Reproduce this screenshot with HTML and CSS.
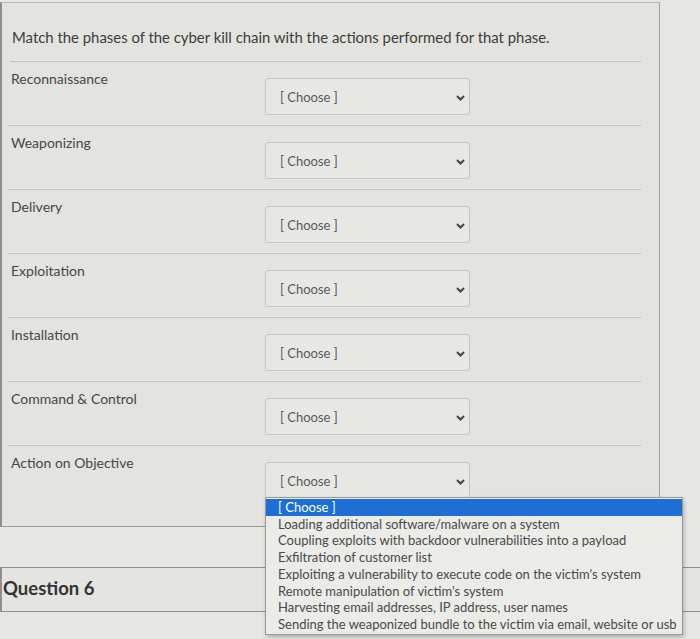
FILE: index.html
```html
<!DOCTYPE html>
<html lang="en">
<head>
  <meta charset="UTF-8">
  <title>Quiz - Question 5</title>
  <link rel="stylesheet" href="styles.css">
</head>
<body>
  <div class="question">
    <div class="question-text">Match the phases of the cyber kill chain with the actions performed for that phase.</div>

    <div class="answers">
      <div class="answer">
        <div class="answer-label">Reconnaissance</div>
        <div class="picker">
          <div class="select"><span>[ Choose ]</span><svg class="chev" width="9" height="6" viewBox="0 0 9 6"><polyline points="1,1 4.5,4.5 8,1" /></svg></div>
        </div>
      </div>
      <div class="answer">
        <div class="answer-label">Weaponizing</div>
        <div class="picker">
          <div class="select"><span>[ Choose ]</span><svg class="chev" width="9" height="6" viewBox="0 0 9 6"><polyline points="1,1 4.5,4.5 8,1" /></svg></div>
        </div>
      </div>
      <div class="answer">
        <div class="answer-label">Delivery</div>
        <div class="picker">
          <div class="select"><span>[ Choose ]</span><svg class="chev" width="9" height="6" viewBox="0 0 9 6"><polyline points="1,1 4.5,4.5 8,1" /></svg></div>
        </div>
      </div>
      <div class="answer">
        <div class="answer-label">Exploitation</div>
        <div class="picker">
          <div class="select"><span>[ Choose ]</span><svg class="chev" width="9" height="6" viewBox="0 0 9 6"><polyline points="1,1 4.5,4.5 8,1" /></svg></div>
        </div>
      </div>
      <div class="answer">
        <div class="answer-label">Installation</div>
        <div class="picker">
          <div class="select"><span>[ Choose ]</span><svg class="chev" width="9" height="6" viewBox="0 0 9 6"><polyline points="1,1 4.5,4.5 8,1" /></svg></div>
        </div>
      </div>
      <div class="answer">
        <div class="answer-label">Command &amp; Control</div>
        <div class="picker">
          <div class="select"><span>[ Choose ]</span><svg class="chev" width="9" height="6" viewBox="0 0 9 6"><polyline points="1,1 4.5,4.5 8,1" /></svg></div>
        </div>
      </div>
      <div class="answer last">
        <div class="answer-label">Action on Objective</div>
        <div class="picker">
          <div class="select"><span>[ Choose ]</span><svg class="chev" width="9" height="6" viewBox="0 0 9 6"><polyline points="1,1 4.5,4.5 8,1" /></svg></div>
          <ul class="options">
            <li class="active">[ Choose ]</li>
            <li>Loading additional software/malware on a system</li>
            <li>Coupling exploits with backdoor vulnerabilities into a payload</li>
            <li>Exfiltration of customer list</li>
            <li>Exploiting a vulnerability to execute code on the victim's system</li>
            <li>Remote manipulation of victim's system</li>
            <li>Harvesting email addresses, IP address, user names</li>
            <li>Sending the weaponized bundle to the victim via email, website or usb</li>
          </ul>
        </div>
      </div>
    </div>
  </div>

  <div class="next-question">
    <h2>Question 6</h2>
  </div>
</body>
</html>
```

FILE: styles.css
```css
html {
  background: #e6e6e3;
}
body {
  margin: 0;
  min-height: 639px;
  background: #e6e6e3;
  font-family: Lato, "Open Sans", sans-serif;
  color: #4a4a4a;
}
.question {
  margin-top: 2px;
  width: 657px;
  background: #e3e3df;
  border-top: 1px solid #b9b9b5;
  border-left: 2px solid #8e8e8b;
  border-right: 1px solid #a5a5a1;
  border-bottom: 1px solid #9c9c98;
  padding-bottom: 16px;
}
.question-text {
  margin: 0 18px 0 8px;
  padding: 24px 2px 14px;
  font-size: 14.9px;
  line-height: 20px;
  color: #3c3c3c;
  border-bottom: 1px solid #c3c3bf;
}
.answers {
  margin: 0 18px 0 6px;
}
.answer {
  display: grid;
  grid-template-columns: 257px 205px;
  box-sizing: border-box;
  height: 64px;
  padding-top: 7px;
  border-bottom: 1px solid #c3c3bf;
}
.answer.last {
  border-bottom: none;
}
.answer-label {
  padding-left: 3px;
  font-size: 14px;
  line-height: 20px;
  color: #474747;
}
.picker {
  position: relative;
  margin-top: 9px;
}
.select {
  display: flex;
  align-items: center;
  justify-content: space-between;
  height: 37px;
  box-sizing: border-box;
  padding: 0 4px 0 14px;
  border: 1px solid #c6c6c2;
  border-radius: 3px;
  background: #e7e7e4;
  font-size: 13px;
  color: #5a5a5a;
}
.chev {
  margin-top: 3px;
}
.chev polyline {
  fill: none;
  stroke: #444;
  stroke-width: 2;
}
.options {
  position: absolute;
  top: 35px;
  left: 0;
  width: 416px;
  margin: 0;
  padding: 1px 0;
  list-style: none;
  background: #ebebe8;
  border: 1px solid #9a9a97;
  box-shadow: 1px 2px 4px rgba(0, 0, 0, 0.25);
  font-size: 13px;
  line-height: 16.7px;
  color: #4a4a4a;
  z-index: 2;
}
.options li {
  padding-left: 12px;
  white-space: nowrap;
}
.options li.active {
  background: #1d6fd6;
  color: #fff;
}
.next-question {
  margin-top: 40px;
  border-top: 1px solid #8f8f8c;
  border-bottom: 1px solid #8f8f8c;
  border-left: 2px solid #8e8e8b;
  background: #e4e4e0;
}
.next-question h2 {
  margin: 0;
  padding: 0 0 0 1px;
  height: 43px;
  line-height: 41px;
  font-size: 18.5px;
  font-weight: 700;
  color: #333;
}
```
